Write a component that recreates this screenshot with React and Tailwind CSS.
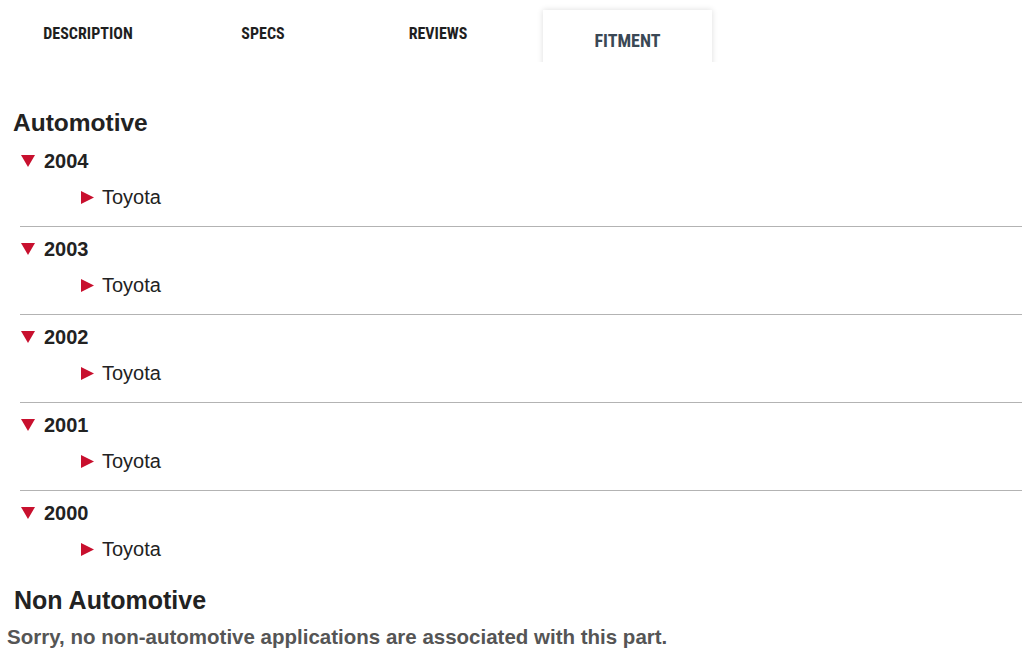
import React from "react";

const YEARS = ["2004", "2003", "2002", "2001", "2000"];

const TABS = [
  { label: "DESCRIPTION", w: "w-[176px]" },
  { label: "SPECS", w: "w-[174px]" },
  { label: "REVIEWS", w: "w-[176px]" },
];

function DownArrow() {
  return (
    <svg width="14" height="12" viewBox="0 0 14 12" className="shrink-0">
      <polygon points="0,0 14,0 7,12" fill="#c8102e" />
    </svg>
  );
}

function RightArrow() {
  return (
    <svg width="13" height="13" viewBox="0 0 13 13" className="shrink-0">
      <polygon points="0,0 13,6.5 0,13" fill="#c8102e" />
    </svg>
  );
}

export default function App() {
  const tabFont = { fontFamily: '"Liberation Sans Narrow", "Roboto Condensed", "Liberation Sans", sans-serif' };

  return (
    <div
      className="w-[1024px] h-[652px] overflow-hidden bg-white text-[#222]"
      style={{ fontFamily: '"Liberation Sans", Arial, sans-serif' }}
    >
      {/* tabs */}
      <div className="flex h-[62px] overflow-hidden px-[6px]">
        {TABS.map((t, i) => (
          <div
            key={t.label}
            className={"flex justify-center pt-[24px] text-[16px] leading-[20px] font-bold text-[#1f1f1f] " + t.w + (i === 0 ? " -ml-[6px]" : "")}
            style={tabFont}
          >
            {t.label}
          </div>
        ))}
        <div className="ml-[17px] mt-[10px] h-[60px] w-[169px] bg-white shadow-[0_0_6px_rgba(0,0,0,0.14)]">
          <div
            className="pt-[20px] text-center text-[18px] leading-[22px] font-bold text-[#3a4855]"
            style={tabFont}
          >
            FITMENT
          </div>
        </div>
      </div>

      <h2 className="mt-[47px] pl-[13px] text-[24.5px] leading-[28px] font-bold">Automotive</h2>

      <div className="ml-[20px] mt-[2px] w-[1002px]">
        {YEARS.map((y, i) => (
          <div
            key={y}
            className={"pt-[10px] " + (i < YEARS.length - 1 ? "pb-[17px] border-b border-[#b3b3b3]" : "")}
          >
            <div className="flex h-[24px] items-center gap-[9px] pl-[1px]">
              <DownArrow />
              <span className="text-[20px] leading-[24px] font-bold">{y}</span>
            </div>
            <div className="mt-[12px] flex h-[24px] items-center gap-[8px] pl-[61px]">
              <RightArrow />
              <span className="text-[20px] leading-[24px]">Toyota</span>
            </div>
          </div>
        ))}
      </div>

      <h2 className="mt-[25px] pl-[14px] text-[25px] leading-[28px] font-bold">Non Automotive</h2>
      <p className="mt-[10px] pl-[7px] text-[20.5px] leading-[26px] font-bold text-[#555]">
        Sorry, no non-automotive applications are associated with this part.
      </p>
    </div>
  );
}
